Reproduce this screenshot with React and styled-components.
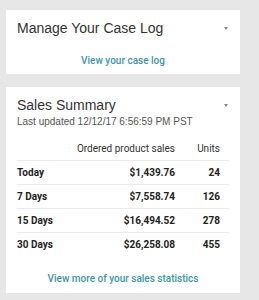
import styled, { createGlobalStyle } from "styled-components";

const GlobalStyle = createGlobalStyle`
  html, body {
    margin: 0;
    padding: 0;
    background: #e7e7e7;
  }
`;

const Page = styled.div`
  display: flex;
  flex-direction: column;
  gap: 13px;
  padding: 10px 0 0 6px;
  width: 234px;
`;

const Card = styled.section`
  background: #fff;
  padding: 10px 11px 0 11px;
  height: ${(props) => props.height};
  box-sizing: border-box;
  display: flex;
  flex-direction: column;
`;

const Header = styled.div`
  display: flex;
  justify-content: space-between;
  align-items: flex-start;
`;

const Title = styled.h2`
  margin: 0;
  font-family: "Liberation Sans", Arial, sans-serif;
  font-size: 14px;
  font-weight: 400;
  color: #333;
  line-height: 16px;
`;

const Caret = styled.span`
  width: 0;
  height: 0;
  margin-top: 7px;
  margin-right: 1px;
  border-left: 2.5px solid transparent;
  border-right: 2.5px solid transparent;
  border-top: 3px solid #8a8a8a;
`;

const Updated = styled.p`
  margin: 3px 0 0;
  font-family: "Liberation Sans", Arial, sans-serif;
  font-size: 10px;
  line-height: 12px;
  color: #555;
`;

const Link = styled.a`
  display: block;
  text-align: center;
  font-family: Roboto, sans-serif;
  font-size: 10px;
  line-height: 14px;
  font-weight: 500;
  color: #3a96ac;
  text-decoration: none;
  margin-top: ${(props) => props.top};
`;

const Table = styled.div`
  margin-top: 13px;
  font-family: Roboto, sans-serif;
  font-size: 10px;
  color: #222;
`;

const Row = styled.div`
  display: grid;
  grid-template-columns: 1fr 110px 45px;
  align-items: center;
  height: ${(props) => (props.head ? "14px" : "23px")};
  padding-bottom: ${(props) => (props.head ? "5px" : "0")};
  border-bottom: ${(props) => (props.last ? "none" : "1px solid #ebebeb")};
  font-weight: ${(props) => (props.head ? 400 : 700)};
  color: ${(props) => (props.head ? "#333" : "#222")};
`;

const Cell = styled.span`
  text-align: ${(props) => (props.right ? "right" : "left")};
  white-space: nowrap;
  padding-right: ${(props) => (props.right ? "9px" : "0")};
`;

const rows = [
  ["Today", "$1,439.76", "24"],
  ["7 Days", "$7,558.74", "126"],
  ["15 Days", "$16,494.52", "278"],
  ["30 Days", "$26,258.08", "455"],
];

const App = () => {
  return (
    <>
      <GlobalStyle />
      <Page>
        <Card height="64px">
          <Header>
            <Title>Manage Your Case Log</Title>
            <Caret />
          </Header>
          <Link top="18px">View your case log</Link>
        </Card>

        <Card height="206px">
          <Header>
            <Title>Sales Summary</Title>
            <Caret />
          </Header>
          <Updated>Last updated 12/12/17 6:56:59 PM PST</Updated>
          <Table>
            <Row head>
              <span />
              <Cell right>Ordered product sales</Cell>
              <Cell right>Units</Cell>
            </Row>
            {rows.map(([label, sales, units], i) => (
              <Row key={label} last={i === rows.length - 1}>
                <Cell>{label}</Cell>
                <Cell right>{sales}</Cell>
                <Cell right>{units}</Cell>
              </Row>
            ))}
          </Table>
          <Link top="16px">View more of your sales statistics</Link>
        </Card>
      </Page>
    </>
  );
};

export default App;
